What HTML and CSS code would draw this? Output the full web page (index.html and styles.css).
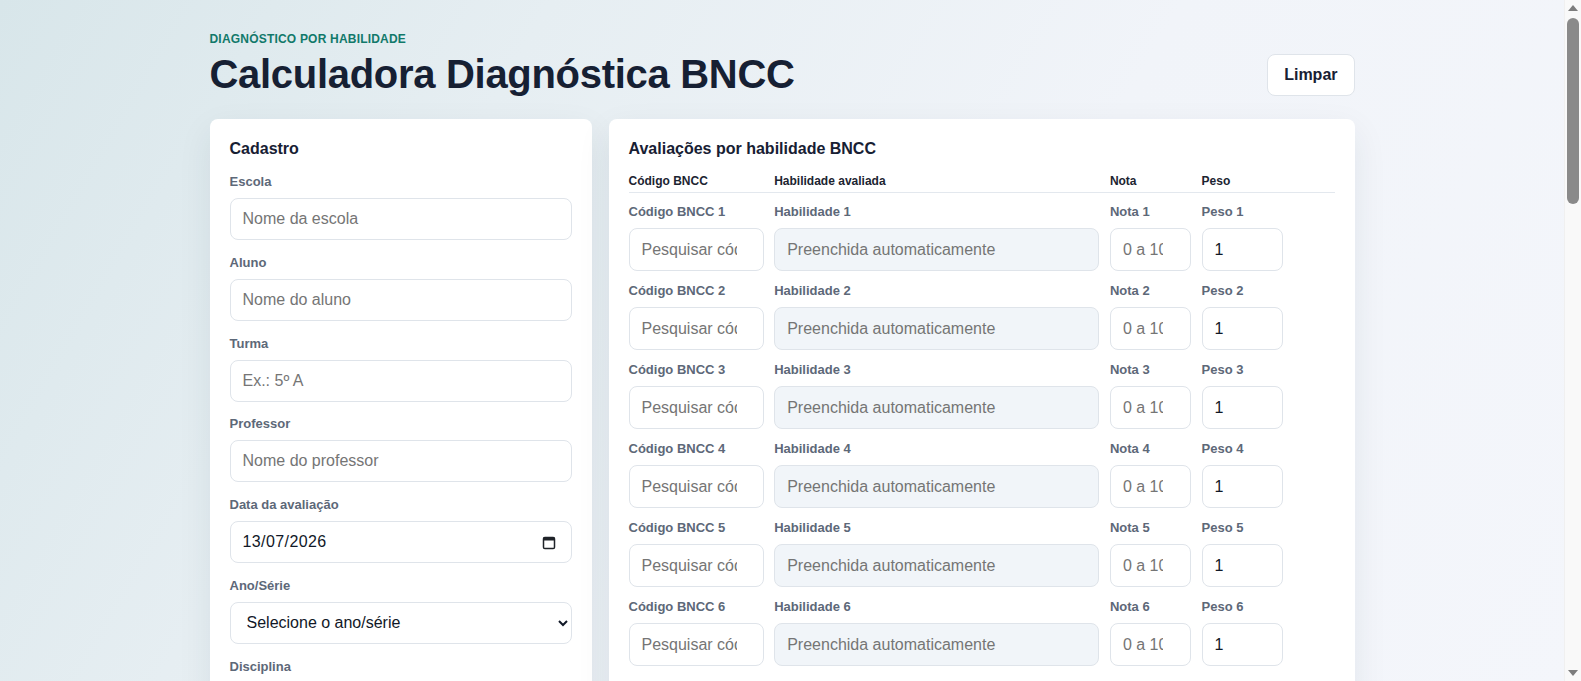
FILE: index.html
```html
<!DOCTYPE html>
<html lang="pt-BR">
<head>
<meta charset="utf-8">
<title>Calculadora Diagnóstica BNCC</title>
<link rel="stylesheet" href="styles.css">
</head>
<body>
<main class="page">
  <header class="top">
    <div class="top-text">
      <p class="eyebrow">DIAGNÓSTICO POR HABILIDADE</p>
      <h1 class="title">Calculadora Diagnóstica BNCC</h1>
    </div>
    <button class="btn" type="button">Limpar</button>
  </header>

  <div class="layout">
    <section class="card">
      <h2 class="card-title">Cadastro</h2>
      <div class="fields">
        <div class="field"><label class="label">Escola</label><input class="input" type="text" placeholder="Nome da escola"></div>
        <div class="field"><label class="label">Aluno</label><input class="input" type="text" placeholder="Nome do aluno"></div>
        <div class="field"><label class="label">Turma</label><input class="input" type="text" placeholder="Ex.: 5º A"></div>
        <div class="field"><label class="label">Professor</label><input class="input" type="text" placeholder="Nome do professor"></div>
        <div class="field"><label class="label">Data da avaliação</label>
          <div class="date-wrap">
            <input class="input date" type="text" value="13/07/2026">
            <svg class="cal-icon" width="14" height="15" viewBox="0 0 14 15" aria-hidden="true">
              <rect x="1.5" y="2.5" width="11" height="11" rx="1.3" fill="none" stroke="#1f2328" stroke-width="1.5"/>
              <rect x="1.5" y="2.5" width="11" height="3" fill="#1f2328"/>
            </svg>
          </div>
        </div>
        <div class="field"><label class="label">Ano/Série</label>
          <select class="input select"><option>Selecione o ano/série</option><option>1º ano</option><option>2º ano</option><option>3º ano</option><option>4º ano</option><option>5º ano</option></select>
        </div>
        <div class="field"><label class="label">Disciplina</label>
          <select class="input select"><option>Selecione a disciplina</option><option>Língua Portuguesa</option><option>Matemática</option></select>
        </div>
        <div class="field"><label class="label">Bimestre</label>
          <select class="input select"><option>Selecione o bimestre</option></select>
        </div>
        <div class="field"><label class="label">Observações</label><input class="input" type="text" placeholder="Anotações gerais"></div>
      </div>
    </section>

    <section class="card">
      <h2 class="card-title">Avaliações por habilidade BNCC</h2>
      <div class="grid-row head">
        <span>Código BNCC</span><span>Habilidade avaliada</span><span>Nota</span><span>Peso</span>
      </div>
      <div class="rows" id="rows"></div>
    </section>
  </div>

  <section class="card result">
    <h2 class="card-title">Resultado do diagnóstico</h2>
    <div class="stats">
      <div class="stat"><span class="label">Média ponderada</span><strong class="stat-value">—</strong></div>
      <div class="stat"><span class="label">Habilidades avaliadas</span><strong class="stat-value">0</strong></div>
      <div class="stat"><span class="label">Nível de proficiência</span><strong class="stat-value">—</strong></div>
    </div>
    <p class="note">Preencha os códigos BNCC e as notas para gerar o diagnóstico por habilidade.</p>
  </section>
</main>

<div class="scrollbar" aria-hidden="true">
  <span class="sb-arrow up"></span>
  <span class="sb-thumb"></span>
  <span class="sb-arrow down"></span>
</div>
<script src="app.js"></script>
</body>
</html>
```

FILE: app.js
```js
(function () {
  var rows = document.getElementById('rows');
  var html = '';
  for (var i = 1; i <= 20; i++) {
    html += '<div class="grid-row">' +
      '<div class="cell"><label class="label">Código BNCC ' + i + '</label><input class="input code" type="text" placeholder="Pesquisar código"></div>' +
      '<div class="cell"><label class="label">Habilidade ' + i + '</label><input class="input auto" type="text" readonly placeholder="Preenchida automaticamente"></div>' +
      '<div class="cell"><label class="label">Nota ' + i + '</label><input class="input num" type="text" inputmode="decimal" placeholder="0 a 10"></div>' +
      '<div class="cell"><label class="label">Peso ' + i + '</label><input class="input num" type="text" inputmode="numeric" value="1"></div>' +
      '</div>';
  }
  rows.innerHTML = html;
})();
```

FILE: styles.css
```css
* { box-sizing: border-box; }

html, body { margin: 0; }

body {
  font-family: "Liberation Sans", Arial, sans-serif;
  color: #172033;
  background: linear-gradient(120deg, #d8e6ea 0%, #e6eef2 28%, #f1f4f9 60%, #f4f6fb 100%) fixed;
  min-height: 100vh;
  padding-right: 17px;
}

.page {
  width: 1145px;
  margin: 0 auto;
  padding: 32px 0 48px;
}

.top {
  display: flex;
  justify-content: space-between;
  align-items: flex-end;
}

.eyebrow {
  margin: 0 0 6px;
  font-size: 12px;
  line-height: 14px;
  font-weight: 700;
  letter-spacing: 0.2px;
  color: #11796a;
}

.title {
  margin: 0;
  font-size: 40px;
  line-height: 44px;
  font-weight: 700;
  letter-spacing: -0.3px;
  color: #162033;
}

.btn {
  height: 42px;
  padding: 0 16px;
  font-family: inherit;
  font-size: 16px;
  font-weight: 700;
  color: #172033;
  background: #ffffff;
  border: 1px solid #dfe4ea;
  border-radius: 8px;
}

.layout {
  margin-top: 23px;
  display: grid;
  grid-template-columns: 382px 1fr;
  gap: 17px;
  align-items: start;
}

.card {
  background: #ffffff;
  border-radius: 8px;
  padding: 20px;
  box-shadow: 0 12px 34px rgba(30, 45, 70, 0.08);
}

.card-title {
  margin: 0 0 16px;
  font-size: 16px;
  line-height: 19px;
  font-weight: 700;
  color: #172033;
}

.fields {
  display: flex;
  flex-direction: column;
  gap: 14.75px;
}

.field { display: flex; flex-direction: column; }

.label {
  display: block;
  font-size: 13px;
  line-height: 16px;
  font-weight: 700;
  color: #5d6878;
  margin-bottom: 8px;
}

.input {
  display: block;
  width: 100%;
  height: 42px;
  padding: 0 12px;
  font-family: inherit;
  font-size: 16px;
  color: #111827;
  background: #ffffff;
  border: 1px solid #dfe4ea;
  border-radius: 8px;
  outline: none;
}

.date { letter-spacing: 0.4px; }

.date-wrap { position: relative; }

.cal-icon {
  position: absolute;
  right: 16px;
  top: 14px;
}

.select { padding: 0 4px 0 12px; }

.grid-row {
  display: grid;
  grid-template-columns: 135px 325px 81px 81px;
  column-gap: 10.7px;
}

.grid-row.head {
  font-size: 12px;
  line-height: 14px;
  font-weight: 700;
  color: #1c2431;
  padding-bottom: 4px;
  border-bottom: 1px solid #e3e8ee;
}

.rows {
  padding-top: 11px;
  display: flex;
  flex-direction: column;
  gap: 12px;
}

.cell { min-width: 0; }

.rows .input { height: 43px; }

.code { padding-right: 26px; }

.auto { background: #f1f5f9; }

.num { padding-right: 27px; }

.result { margin-top: 17px; }

.stats {
  display: grid;
  grid-template-columns: repeat(3, 1fr);
  gap: 17px;
}

.stat {
  border: 1px solid #e3e8ee;
  border-radius: 8px;
  padding: 16px;
  height: 120px;
}

.stat-value {
  display: block;
  font-size: 28px;
  color: #172033;
}

.note {
  margin: 16px 0 0;
  font-size: 14px;
  color: #5d6878;
}

.scrollbar {
  position: fixed;
  top: 0;
  right: 0;
  width: 17px;
  height: 100vh;
  background: #f9f9f9;
  border-left: 1px solid #f0f0f0;
}

.sb-thumb {
  position: absolute;
  left: 2px;
  top: 18px;
  width: 12px;
  height: 186px;
  border-radius: 6px;
  background: #8a8a8a;
}

.sb-arrow {
  position: absolute;
  left: 3px;
  width: 0;
  height: 0;
  border-left: 5px solid transparent;
  border-right: 5px solid transparent;
}

.sb-arrow.up {
  top: 5px;
  border-bottom: 6px solid #7d7d7d;
}

.sb-arrow.down {
  bottom: 5px;
  border-top: 6px solid #7d7d7d;
}
```
